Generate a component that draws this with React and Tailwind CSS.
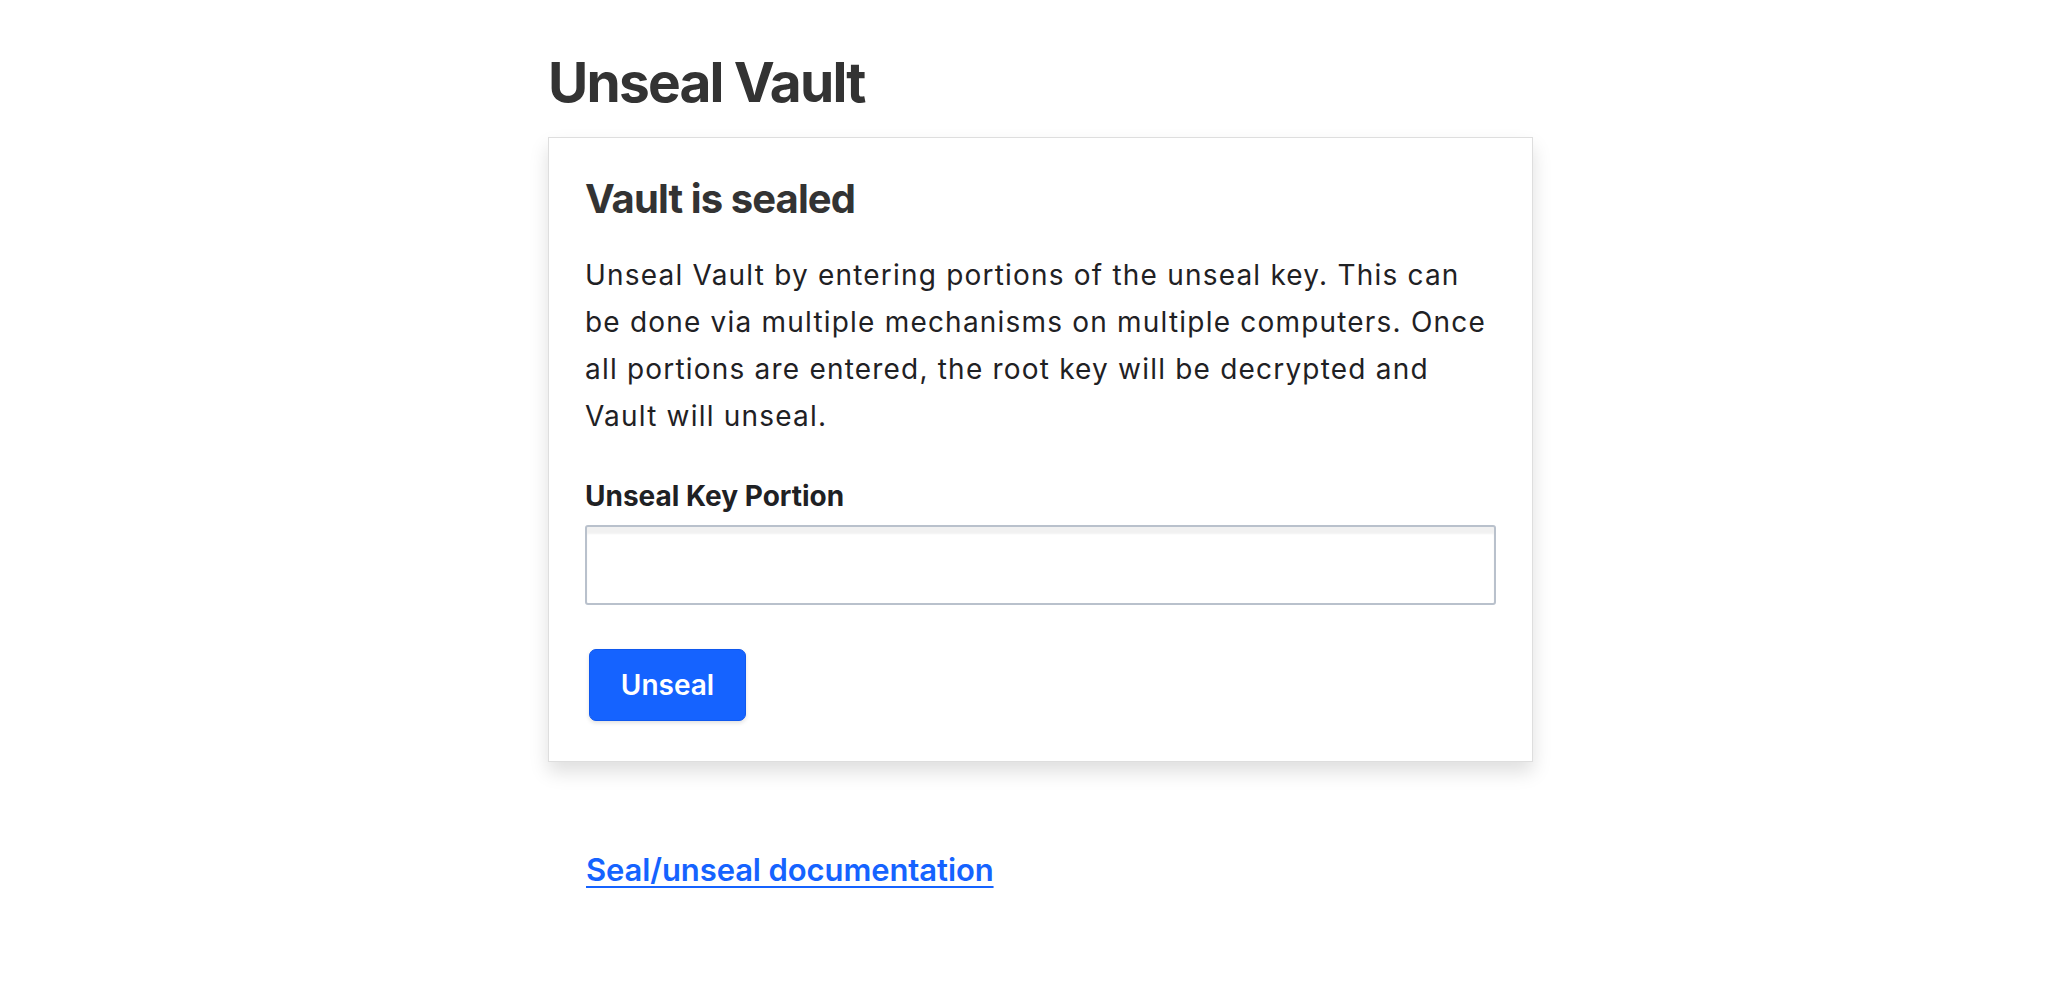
import React, { useState } from 'react';

const UnsealPage = () => {
  const [keyPortion, setKeyPortion] = useState('');

  return (
    <div className="min-h-screen bg-white font-['Inter','Liberation_Sans',sans-serif]">
      <div className="pl-[548px] pt-[47px]">
        <div className="w-[985px]">
          {/* Page title */}
          <h1 className="text-[55px] leading-[70px] font-bold tracking-[-1.8px] text-[#333333]">Unseal Vault</h1>

          {/* Card */}
          <div className="mt-[20px] border border-[#dedede] bg-white p-[36px] shadow-[0_10px_18px_rgba(0,0,0,0.13)]">
            <h2 className="text-[40px] leading-[50px] font-bold tracking-[-0.9px] text-[#333333]">Vault is sealed</h2>
            <p className="mt-[28px] text-[28px] leading-[47px] tracking-[1.2px] text-[#1f2124]">
              Unseal Vault by entering portions of the unseal key. This can
              <br />
              be done via multiple mechanisms on multiple computers. Once
              <br />
              all portions are entered, the root key will be decrypted and
              <br />
              Vault will unseal.
            </p>

            <label className="block mt-[35px] text-[28px] leading-[42px] font-bold text-[#1f2124]">
              Unseal Key Portion
            </label>
            <input
              type="password"
              value={keyPortion}
              onChange={(e) => setKeyPortion(e.target.value)}
              className="mt-[8px] block w-full h-[80px] rounded-[3px] border-2 border-[#b9c1cc] bg-white px-4 text-[28px] outline-none shadow-[inset_0_7px_2px_rgba(0,0,0,0.055)]"
            />

            <button className="mt-[44px] ml-[4px] mb-[4px] h-[72px] w-[157px] rounded-[7px] border border-[#0f58ee] bg-[#1563ff] text-[28px] font-semibold text-white shadow-[0_2px_4px_rgba(0,0,0,0.12)]">
              Unseal
            </button>
          </div>

          {/* Footer link */}
          <div className="pl-[38px] pt-[85px]">
            <a href="#" className="text-[31px] leading-[46px] font-semibold tracking-[-0.1px] text-[#1563ff] underline underline-offset-[5px] decoration-2">
              Seal/unseal documentation
            </a>
          </div>
        </div>
      </div>
    </div>
  );
};

export default function App() {
  return <UnsealPage />;
}
